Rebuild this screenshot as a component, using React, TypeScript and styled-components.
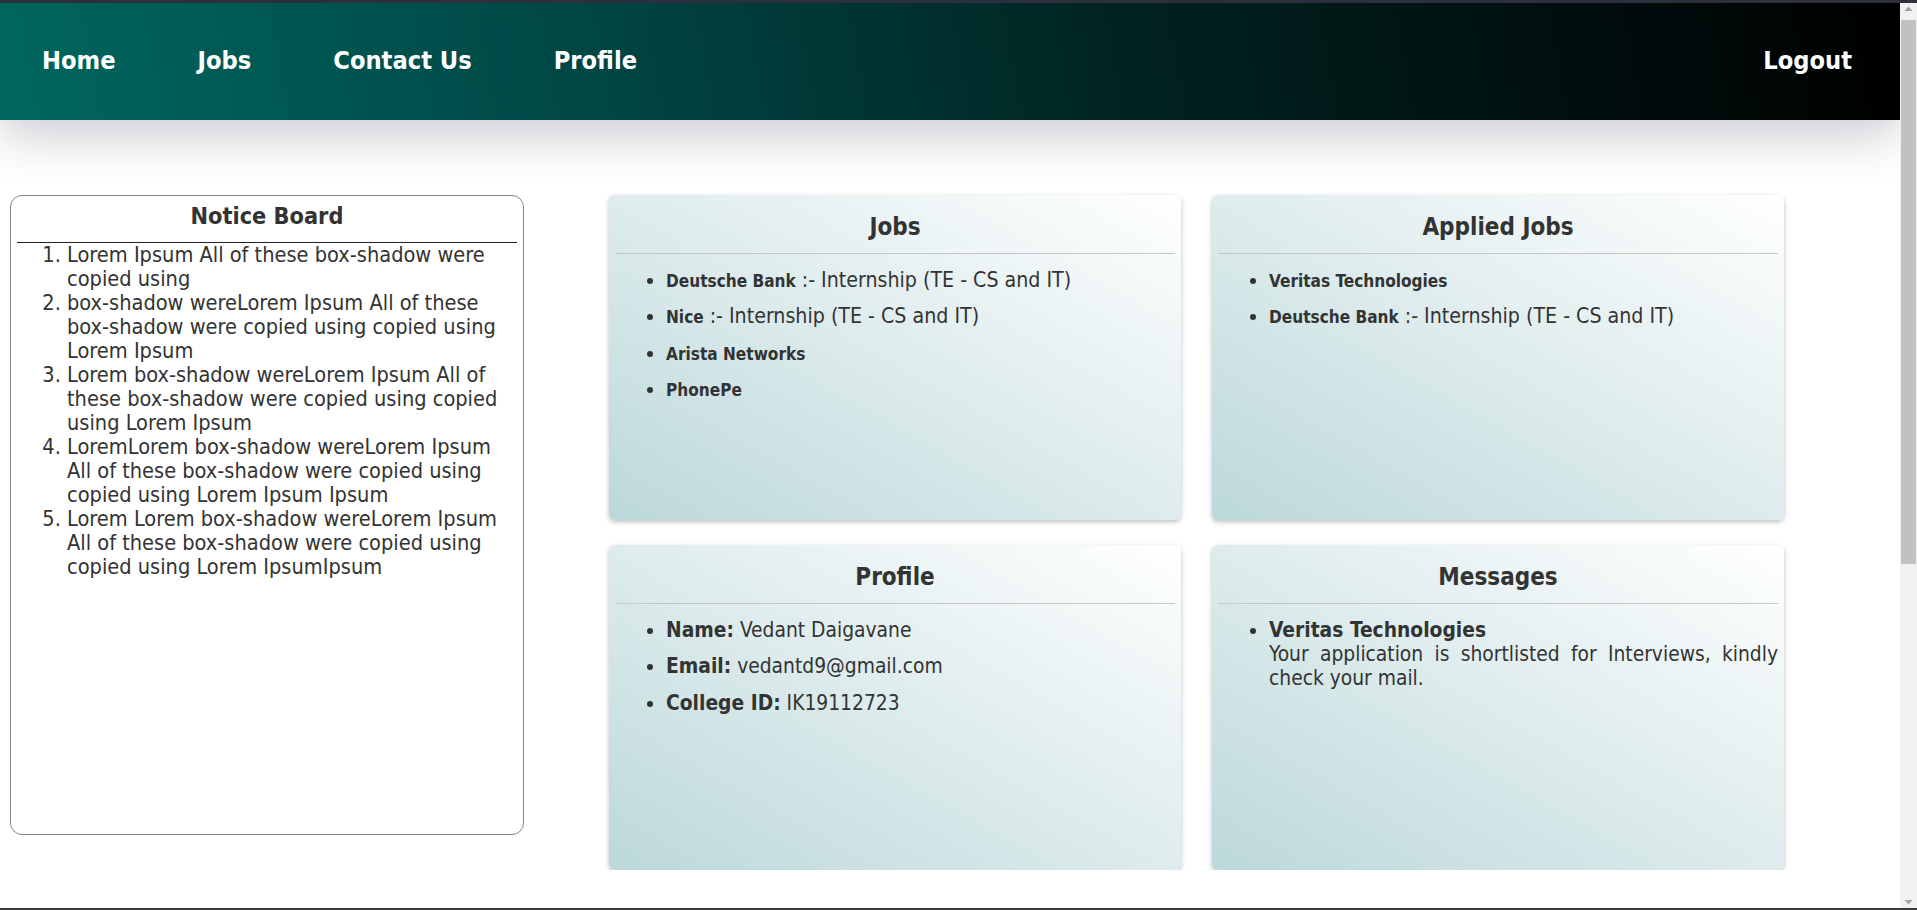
import React from "react";
import styled, { createGlobalStyle } from "styled-components";

const Global = createGlobalStyle`
  body {
    margin: 0 17px 0 0;
    background: #ffffff;
    font-family: "DejaVu Sans Condensed", "DejaVu Sans", sans-serif;
    font-stretch: condensed;
    color: #333333;
  }
  * { box-sizing: border-box; }
`;

const Page = styled.div`
  display: flex;
  flex-direction: column;
`;

const WindowEdge = styled.div<{ $pos: "top" | "bottom" }>`
  position: fixed;
  left: 0;
  right: 0;
  ${(p) =>
    p.$pos === "top"
      ? "top: 0; height: 3px; background: #2c2f3c;"
      : "bottom: 0; height: 2px; background: #3a3a3a;"}
  z-index: 20;
`;

const Scrollbar = styled.div`
  position: fixed;
  top: 0;
  right: 0;
  bottom: 0;
  width: 17px;
  background: #f1f1f1;
  display: flex;
  flex-direction: column;
  z-index: 10;
`;

const ScrollArrow = styled.div`
  height: 17px;
  display: flex;
  align-items: center;
  justify-content: center;
  flex-shrink: 0;
`;

const ScrollThumb = styled.div`
  margin: 3px 1px 0 1px;
  height: 544px;
  background: #c1c1c1;
`;

const ScrollSpacer = styled.div`
  flex: 1;
`;

const NavBar = styled.nav`
  height: 120px;
  display: flex;
  align-items: center;
  padding: 0 6px 0 1px;
  background: linear-gradient(80deg, #00675f 0%, #004846 30%, #002220 60%, #000000 100%);
  box-shadow: 0 14px 50px rgba(30, 30, 60, 0.24);
  position: relative;
  z-index: 1;
`;

const NavLink = styled.a<{ $push?: boolean }>`
  color: #ffffff;
  font-weight: bold;
  font-size: 25.2px;
  text-decoration: none;
  padding: 0 41px;
  ${(p) => (p.$push ? "margin-left: auto; padding-right: 42px;" : "")}
  cursor: pointer;
`;

const Main = styled.main`
  display: flex;
  align-items: flex-start;
  padding: 75px 0 0 10px;
  gap: 85px;
`;

const NoticeBoard = styled.section`
  width: 514px;
  height: 640px;
  border: 1px solid #888888;
  border-radius: 12px;
  padding: 6px;
  flex-shrink: 0;
`;

const NoticeTitle = styled.h2`
  margin: 0;
  padding: 0 0 13px;
  font-size: 23.3px;
  font-weight: bold;
  text-align: center;
`;

const NoticeRule = styled.div`
  height: 1px;
  background: #222222;
`;

const NoticeList = styled.ol`
  margin: 0;
  padding: 0 10px 0 50px;
  font-size: 21.6px;
  line-height: 24px;
`;

const CardGrid = styled.div`
  display: grid;
  grid-template-columns: 572px 572px;
  grid-auto-rows: 325px;
  column-gap: 31px;
  row-gap: 25px;
`;

const Card = styled.section`
  border-radius: 6px;
  padding: 6px;
  background: linear-gradient(to top right, #bcd8da 0%, #ffffff 100%);
  box-shadow: 0 2px 5px rgba(0, 0, 0, 0.25);
`;

const CardTitle = styled.h2`
  margin: 0;
  padding: 12px 0;
  font-size: 24px;
  font-weight: bold;
  text-align: center;
`;

const CardRule = styled.div`
  height: 1px;
  background: #c6c6c6;
`;

const CardList = styled.ul`
  margin: 0;
  padding: 14px 0 0 51px;
  font-size: 20.8px;
  line-height: 24.4px;
`;

const Item = styled.li<{ $justify?: boolean }>`
  margin-bottom: 12px;
  ${(p) => (p.$justify ? "text-align: justify; line-height: 24px;" : "")}
`;

const Company = styled.b<{ $big?: boolean }>`
  font-size: ${(p) => (p.$big ? "20.8px" : "17.1px")};
  line-height: ${(p) => (p.$big ? "inherit" : "1")};
`;

const Detail = styled.span`
  font-size: 21.2px;
  line-height: 1;
`;

const notices = [
  "Lorem Ipsum All of these box-shadow were copied using",
  "box-shadow wereLorem Ipsum All of these box-shadow were copied using copied using Lorem Ipsum",
  "Lorem box-shadow wereLorem Ipsum All of these box-shadow were copied using copied using Lorem Ipsum",
  "LoremLorem box-shadow wereLorem Ipsum All of these box-shadow were copied using copied using Lorem Ipsum Ipsum",
  "Lorem Lorem box-shadow wereLorem Ipsum All of these box-shadow were copied using copied using Lorem IpsumIpsum",
];

const Arrow = ({ down }: { down?: boolean }) => (
  <svg width="9" height="6" viewBox="0 0 9 6">
    <path d={down ? "M0.5 1 L8.5 1 L4.5 5.5 Z" : "M0.5 5 L8.5 5 L4.5 0.5 Z"} fill="#a3a3a3" />
  </svg>
);

export default function App() {
  return (
    <>
      <Global />
      <WindowEdge $pos="top" />
      <Page>
        <NavBar>
          <NavLink>Home</NavLink>
          <NavLink>Jobs</NavLink>
          <NavLink>Contact Us</NavLink>
          <NavLink>Profile</NavLink>
          <NavLink $push>Logout</NavLink>
        </NavBar>
        <Main>
          <NoticeBoard>
            <NoticeTitle>Notice Board</NoticeTitle>
            <NoticeRule />
            <NoticeList>
              {notices.map((n, i) => (
                <li key={i}>{n}</li>
              ))}
            </NoticeList>
          </NoticeBoard>
          <CardGrid>
            <Card>
              <CardTitle>Jobs</CardTitle>
              <CardRule />
              <CardList>
                <Item>
                  <Company>Deutsche Bank</Company> <Detail>:- Internship (TE - CS and IT)</Detail>
                </Item>
                <Item>
                  <Company>Nice</Company> <Detail>:- Internship (TE - CS and IT)</Detail>
                </Item>
                <Item>
                  <Company>Arista Networks</Company>
                </Item>
                <Item>
                  <Company>PhonePe</Company>
                </Item>
              </CardList>
            </Card>
            <Card>
              <CardTitle>Applied Jobs</CardTitle>
              <CardRule />
              <CardList>
                <Item>
                  <Company>Veritas Technologies</Company>
                </Item>
                <Item>
                  <Company>Deutsche Bank</Company> <Detail>:- Internship (TE - CS and IT)</Detail>
                </Item>
              </CardList>
            </Card>
            <Card>
              <CardTitle>Profile</CardTitle>
              <CardRule />
              <CardList>
                <Item>
                  <b>Name:</b> Vedant Daigavane
                </Item>
                <Item>
                  <b>Email:</b> vedantd9@gmail.com
                </Item>
                <Item>
                  <b>College ID:</b> IK19112723
                </Item>
              </CardList>
            </Card>
            <Card>
              <CardTitle>Messages</CardTitle>
              <CardRule />
              <CardList>
                <Item $justify>
                  <Company $big>Veritas Technologies</Company>
                  <br />
                  Your application is shortlisted for Interviews, kindly check your mail.
                </Item>
              </CardList>
            </Card>
          </CardGrid>
        </Main>
      </Page>
      <Scrollbar>
        <ScrollArrow>
          <Arrow />
        </ScrollArrow>
        <ScrollThumb />
        <ScrollSpacer />
        <ScrollArrow>
          <Arrow down />
        </ScrollArrow>
      </Scrollbar>
      <WindowEdge $pos="bottom" />
    </>
  );
}
